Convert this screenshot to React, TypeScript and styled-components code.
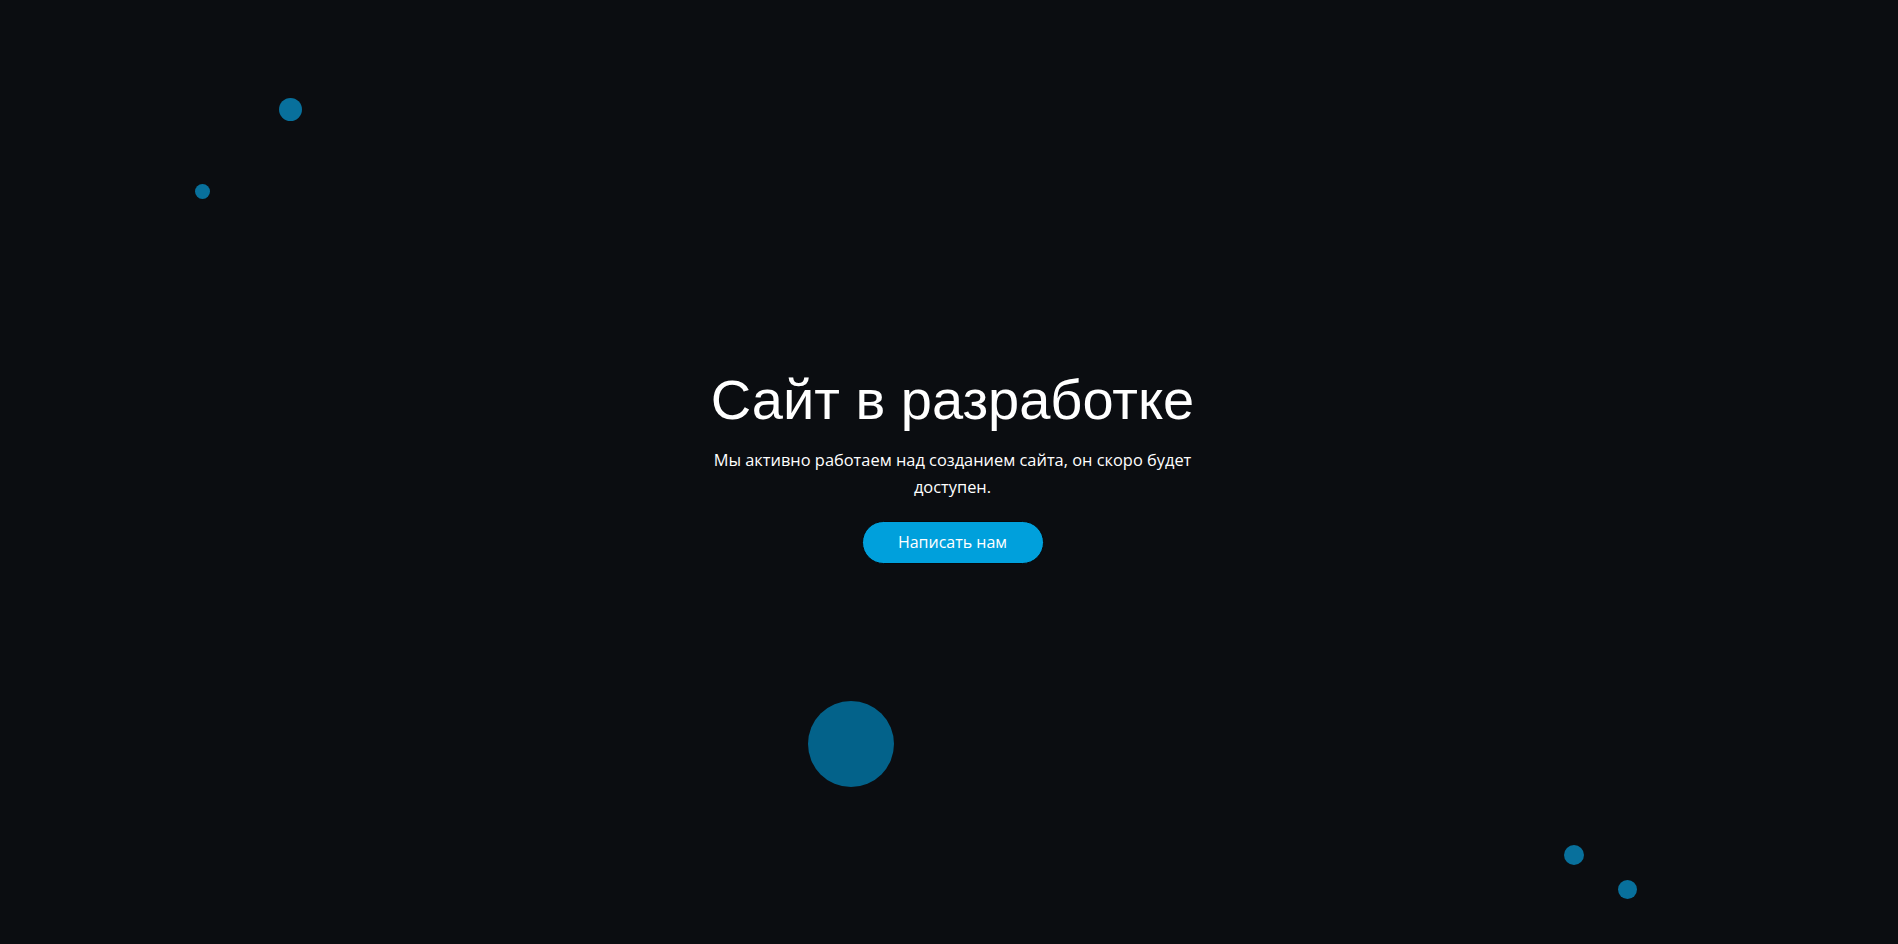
import React from 'react';
import styled, { createGlobalStyle } from 'styled-components';

const GlobalStyle = createGlobalStyle`
  html, body {
    margin: 0;
    padding: 0;
    background: #0b0d11;
  }
`;

const S = {
  Page: styled.div`
    position: relative;
    display: flex;
    justify-content: center;
    align-items: center;

    width: 100%;
    height: 100vh;
    padding-left: 7px;
    box-sizing: border-box;
    overflow: hidden;
    background: #0b0d11;
  `,
  Content: styled.div`
    position: relative;
    z-index: 1;
    display: flex;
    flex-direction: column;
    align-items: center;

    max-width: 510px;
    padding-bottom: 14px;
    text-align: center;
  `,
  Title: styled.h1`
    margin: 0 0 12px;
    font-family: 'Liberation Sans', Arial, sans-serif;
    font-size: 56px;
    font-weight: 400;
    line-height: 1.2;
    color: #ffffff;
    white-space: nowrap;
  `,
  Text: styled.p`
    margin: 0 0 21px;
    font-family: 'Open Sans', sans-serif;
    font-size: 16.4px;
    line-height: 27px;
    color: #ffffff;
  `,
  Button: styled.button`
    width: 182px;
    height: 43px;
    padding: 0;

    border: 1px solid #06080b;
    border-radius: 22px;
    background: #00a0dc;
    color: #ffffff;

    font-family: 'Open Sans', sans-serif;
    font-size: 16px;
    cursor: pointer;
  `,
  Bubble: styled.span<{ $x: number; $y: number; $size: number; $color: string }>`
    position: absolute;
    left: ${({ $x, $size }) => $x - $size / 2}px;
    top: ${({ $y, $size }) => $y - $size / 2}px;
    width: ${({ $size }) => $size}px;
    height: ${({ $size }) => $size}px;
    border-radius: 50%;
    background: ${({ $color }) => $color};
  `,
};

const bubbles = [
  { x: 290, y: 109, size: 23, color: '#08709c' },
  { x: 202, y: 191, size: 15, color: '#08709c' },
  { x: 851, y: 744, size: 86, color: '#03628a' },
  { x: 1574, y: 855, size: 20, color: '#08709c' },
  { x: 1627, y: 889, size: 19, color: '#08709c' },
];

function App() {
  return (
    <>
      <GlobalStyle />
      <S.Page>
        {bubbles.map((b, i) => (
          <S.Bubble key={i} $x={b.x} $y={b.y} $size={b.size} $color={b.color} />
        ))}
        <S.Content>
          <S.Title>Сайт в разработке</S.Title>
          <S.Text>Мы активно работаем над созданием сайта, он скоро будет доступен.</S.Text>
          <S.Button>Написать нам</S.Button>
        </S.Content>
      </S.Page>
    </>
  );
}

export default App;
